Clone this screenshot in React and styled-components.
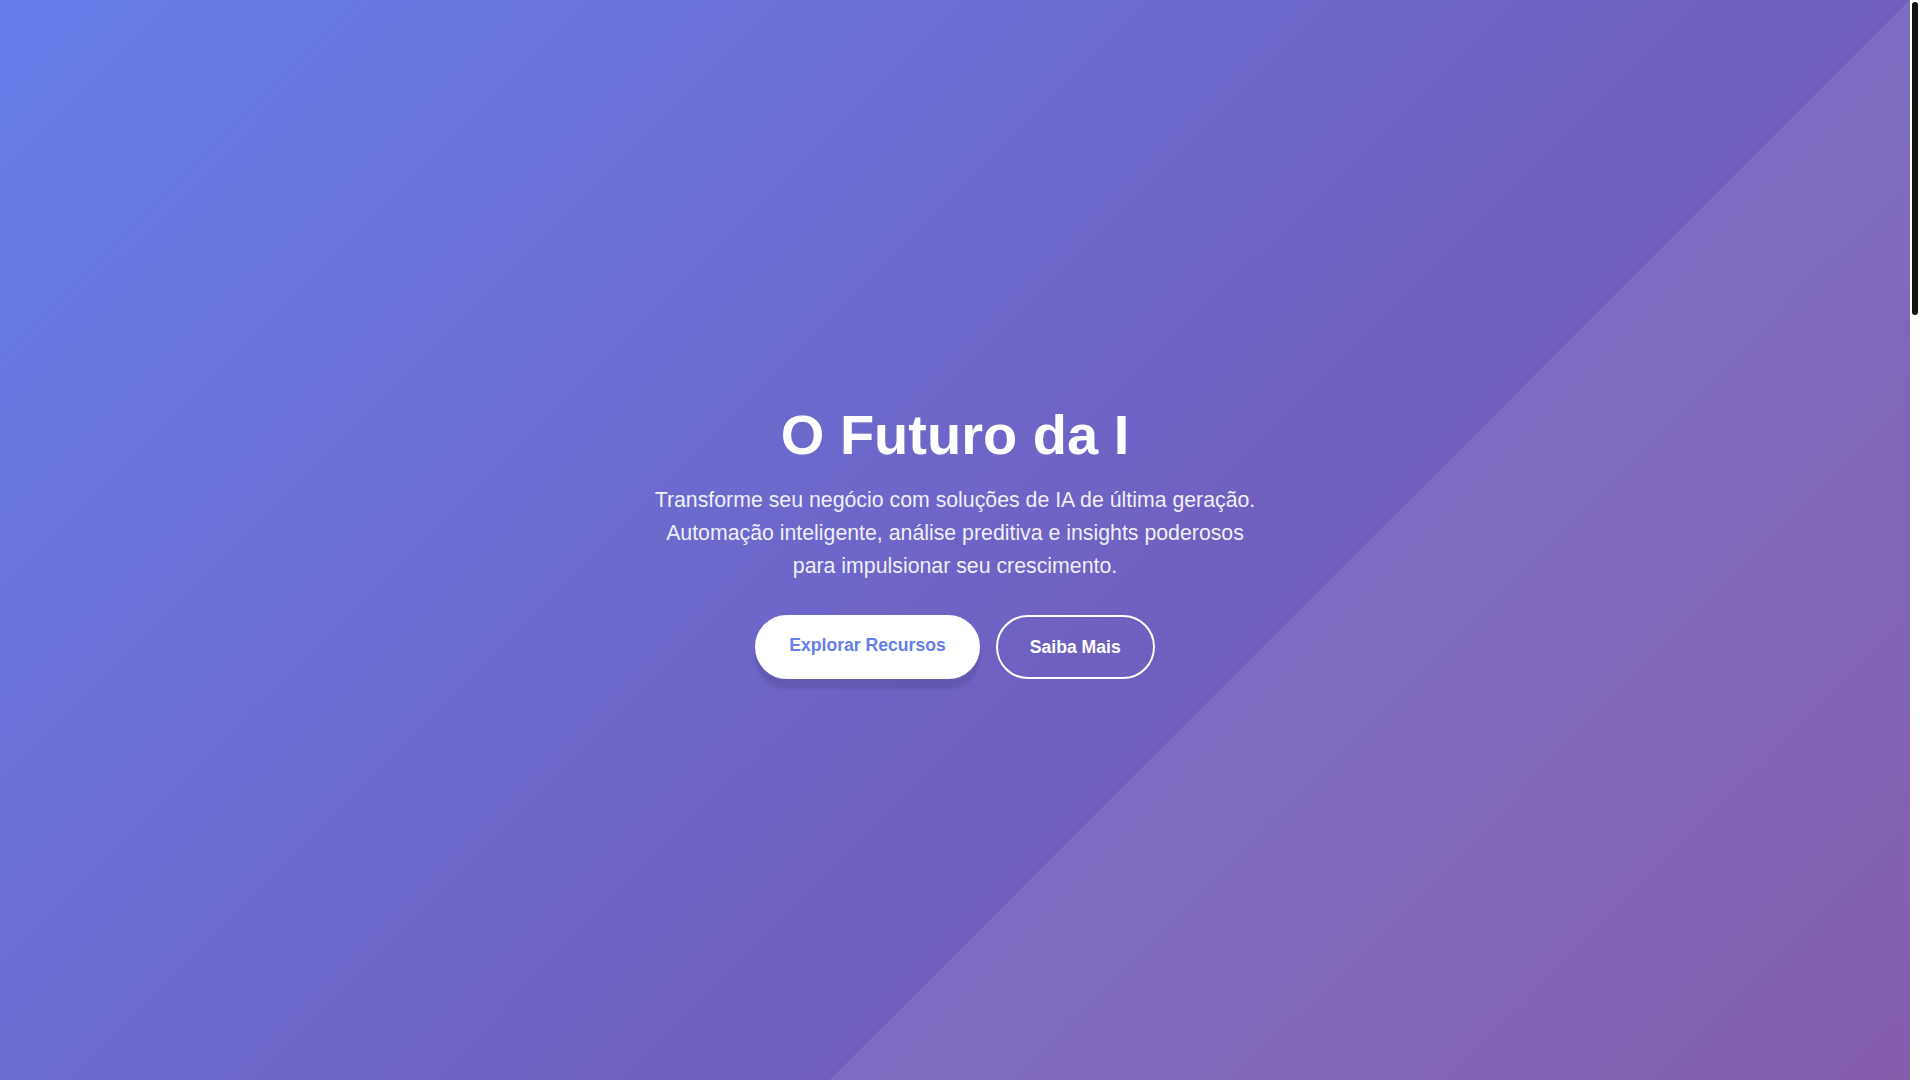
import React from "react";
import styled, { createGlobalStyle } from "styled-components";

const GlobalStyle = createGlobalStyle`
  * {
    box-sizing: border-box;
  }

  html, body {
    margin: 0;
    padding: 0;
    height: 100%;
    overflow: hidden;
  }

  body {
    font-family: "Liberation Sans", Arial, sans-serif;
    background: #ffffff;
  }
`;

const App = () => {
  return (
    <Page>
      <GlobalStyle />
      <Hero>
        <HeroContent>
          <Title>O Futuro da I</Title>
          <Subtitle>
            Transforme seu negócio com soluções de IA de última geração.
            Automação inteligente, análise preditiva e insights poderosos
            para impulsionar seu crescimento.
          </Subtitle>
          <Buttons>
            <Button primary>Explorar Recursos</Button>
            <Button>Saiba Mais</Button>
          </Buttons>
        </HeroContent>
      </Hero>
      <ScrollRail>
        <ScrollThumb />
      </ScrollRail>
    </Page>
  );
};

const Page = styled.div`
  height: 100vh;
  display: flex;
`;

// fundo em degradê com a faixa diagonal clara no canto direito
const Hero = styled.section`
  flex: 1;
  display: flex;
  justify-content: center;
  align-items: center;
  text-align: center;
  color: #ffffff;
  background:
    linear-gradient(
      135deg,
      rgba(255, 255, 255, 0) 1350px,
      rgba(255, 255, 255, 0.1) 1351px
    ),
    linear-gradient(135deg, #667eea 0%, #764ba2 100%);
`;

const HeroContent = styled.div`
  display: flex;
  flex-direction: column;
  align-items: center;
  padding: 0 32px;
`;

const Title = styled.h1`
  margin: 0 0 16px;
  font-size: 56px;
  line-height: 1.2;
  font-weight: 700;
  color: #ffffff;
`;

const Subtitle = styled.p`
  max-width: 612px;
  margin: 0 0 32px;
  font-size: 21.3px;
  line-height: 33px;
  color: rgba(255, 255, 255, 0.92);
`;

const Buttons = styled.div`
  display: flex;
  gap: 16px;
  justify-content: center;
`;

const Button = styled.button`
  padding: 19px 32px;
  border-radius: 50px;
  border: 2px solid #ffffff;
  background: ${(props) => (props.primary ? "#ffffff" : "transparent")};
  color: ${(props) => (props.primary ? "#667eea" : "#ffffff")};
  font-family: "Liberation Sans", Arial, sans-serif;
  font-size: 17.6px;
  line-height: 22px;
  font-weight: 700;
  cursor: pointer;
  ${(props) =>
    props.primary
      ? "box-shadow: 0 10px 3px rgba(0, 0, 0, 0.1); padding-top: 17px; padding-bottom: 21px;"
      : ""}
`;

// barra de rolagem escura, como aparece na captura
const ScrollRail = styled.div`
  width: 10px;
  padding: 2px;
  background: #ffffff;
`;

const ScrollThumb = styled.div`
  height: 313px;
  border-radius: 3px;
  background: #111111;
`;

export default App;
